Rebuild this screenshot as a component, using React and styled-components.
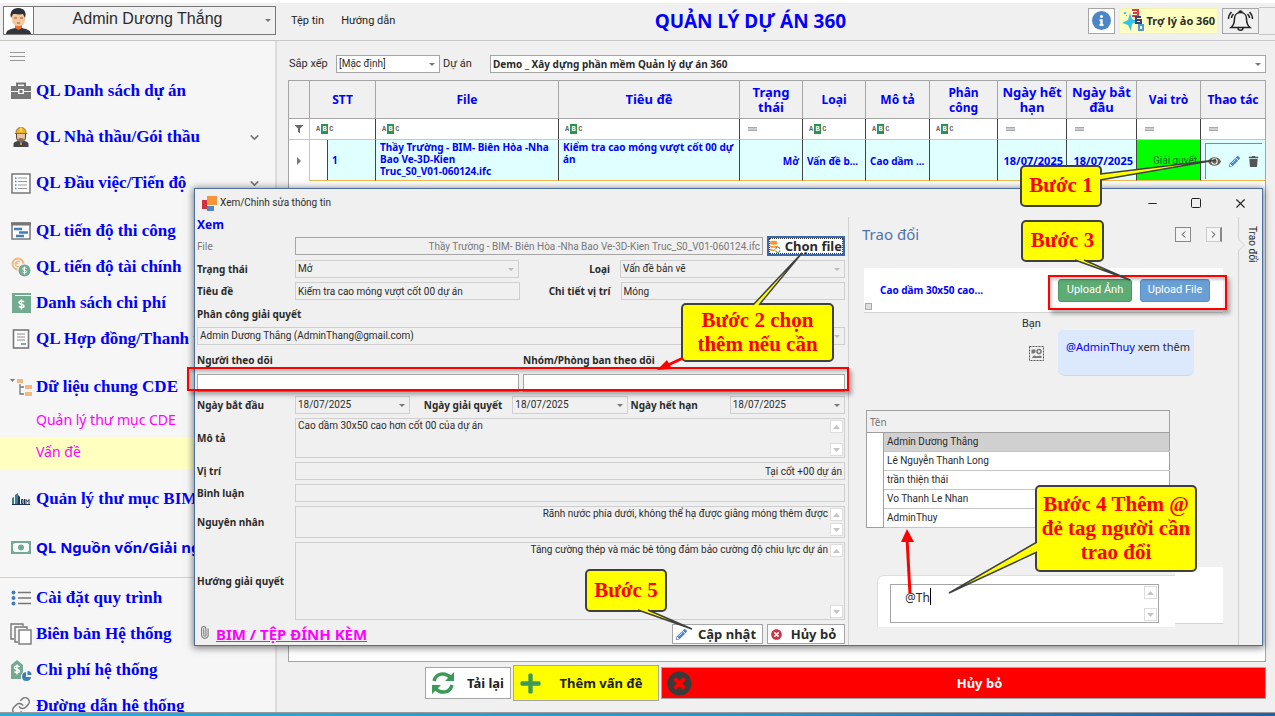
import React from "react";
import styled, { createGlobalStyle, css } from "styled-components";
import {
  FaEye,
  FaTrash,
  FaPencilAlt,
  FaFilter,
  FaTimesCircle,
  FaPlus,
  FaInfo,
} from "react-icons/fa";
import { ChevronDown, ChevronLeft, ChevronRight, Link, Paperclip, Minus, Square, X } from "lucide-react";

const narrow = 'Roboto, "Liberation Sans", sans-serif';
const wide = '"Noto Sans", "Open Sans", sans-serif';
const serif = '"Liberation Serif", serif';

const GlobalStyle = createGlobalStyle`
  * {
    box-sizing: border-box;
  }
  body {
    margin: 0;
    overflow: hidden;
    background: #f0f0f0;
    color: #2b2b2b;
    font-family: ${narrow};
    font-size: 10px;
    line-height: 14px;
  }
  button, input, select, textarea {
    font: inherit;
    color: inherit;
    border-radius: 0;
    margin: 0;
  }
`;

const Page = styled.div`
  position: relative;
  display: flex;
  flex-direction: column;
  height: 100vh;
  border-top: 3px solid #fff;
`;

/* ---------- header ---------- */

const Header = styled.header`
  display: flex;
  align-items: center;
  height: 38px;
  flex-shrink: 0;
  padding: 0 0 2px 3px;
  border-bottom: 1px solid #c6c6c6;
`;

const UserBox = styled.label`
  display: flex;
  align-items: center;
  width: 273px;
  height: 29px;
  border: 1px solid #777;
  background: #f0f0f0;
`;

const UserSelect = styled.select`
  flex: 1;
  min-width: 0;
  height: 27px;
  padding: 0 0 3px;
  border: 0;
  border-left: 1px solid #777;
  background: transparent;
  appearance: none;
  text-align-last: center;
  font-family: "Liberation Sans", sans-serif;
  font-size: 16px;
  line-height: 24px;
`;

const Caret = styled.span`
  flex-shrink: 0;
  width: 0;
  height: 0;
  margin: 0 4px;
  border: 3px solid transparent;
  border-top-color: ${(p) => (p.$light ? "#bbb" : "#777")};
  border-bottom-width: 0;
`;

const TopMenu = styled.nav`
  display: flex;
  gap: 17px;
  padding: 0 18px 0 15px;
  font-size: 11px;
`;

const TopLink = styled.a`
  color: #222;
  text-decoration: none;
`;

const AppTitle = styled.h1`
  flex: 1;
  margin: 0;
  text-align: center;
  font-family: ${wide};
  font-size: 19px;
  line-height: 24px;
  color: #0000ff;
`;

const HeaderButtons = styled.div`
  display: flex;
  align-items: center;
  gap: 4px;
`;

const HeaderButton = styled.button`
  display: flex;
  align-items: center;
  justify-content: center;
  gap: 2px;
  height: 26px;
  padding: 0 ${(p) => (p.$yellow ? 2 : 3)}px;
  border: 1px solid ${(p) => (p.$yellow ? "#f4f4b0" : "#a5a5a5")};
  background: ${(p) => (p.$yellow ? "#ffffc0" : p.$plain ? "#f0f0f0" : "#fff")};
  font-family: ${wide};
  font-size: 11px;
  font-weight: ${(p) => (p.$yellow ? 700 : 400)};
  white-space: nowrap;
`;

const HeaderEnd = styled.div`
  width: 16px;
  height: 28px;
  margin-left: -4px;
  border: solid #c6c6c6;
  border-width: 1px 0;
`;

const InfoDot = styled.span`
  display: flex;
  align-items: center;
  justify-content: center;
  width: 19px;
  height: 19px;
  border-radius: 50%;
  background: #4d86c6;
  color: #fff;
`;

/* ---------- sidebar ---------- */

const Body = styled.div`
  display: flex;
  flex: 1;
  min-height: 0;
`;

const Sidebar = styled.nav`
  width: 277px;
  flex-shrink: 0;
  overflow: hidden;
  background: #f6f6f6;
  border-right: 2px solid #dcdcdc;
`;

const MenuToggle = styled.button`
  display: flex;
  align-items: center;
  width: 100%;
  height: 32px;
  padding: 0 10px;
  border: 0;
  background: transparent;
`;

const SideItem = styled.a`
  display: flex;
  align-items: center;
  height: 36px;
  margin-top: ${(p) => p.$gap || 0}px;
  padding-right: 14px;
  color: #0000ff;
  text-decoration: none;
  white-space: nowrap;
  font-family: ${(p) => (p.$sans ? wide : serif)};
  font-size: ${(p) => (p.$sans ? 15 : 17)}px;
  font-weight: 700;
  line-height: 20px;
`;

const SideIcon = styled.span`
  display: flex;
  align-items: center;
  justify-content: center;
  flex-shrink: 0;
  width: 24px;
  margin: 0 3px 0 9px;
`;

const SideText = styled.span`
  flex: 1;
`;

const SubItem = styled.a`
  display: flex;
  align-items: center;
  height: 32px;
  padding: 0 0 2px 36px;
  background: ${(p) => (p.$active ? "#ffffc0" : "transparent")};
  color: #ff00ff;
  font-family: ${wide};
  font-size: 14px;
  text-decoration: none;
`;

const SideLine = styled.hr`
  margin: 12px 0 2px;
  border: 0;
  border-top: 1px solid #d0d0d0;
`;

/* ---------- main grid ---------- */

const Main = styled.main`
  display: flex;
  flex-direction: column;
  flex: 1;
  min-width: 0;
  padding: 14px 9px 11px 11px;
`;

const Toolbar = styled.div`
  display: flex;
  align-items: center;
  height: 18px;
  margin-bottom: 7px;
`;

const ToolLabel = styled.label`
  width: ${(p) => p.$width}px;
  flex-shrink: 0;
  padding-left: ${(p) => p.$pad}px;
  font-size: 11px;
`;

const SelectBox = styled.span`
  display: flex;
  align-items: center;
  flex: ${(p) => (p.$width ? "none" : "1")};
  width: ${(p) => (p.$width ? p.$width + "px" : "auto")};
  min-width: 0;
  height: 18px;
  border: 1px solid ${(p) => (p.$light ? "#cfcfcf" : "#a5a5a5")};
  background: ${(p) => (p.$light ? "#f0f0f0" : "#fff")};
`;

const PlainSelect = styled.select`
  flex: 1;
  min-width: 0;
  height: 16px;
  padding: 0 2px;
  border: 0;
  background: transparent;
  appearance: none;
  line-height: 14px;
  ${(p) =>
    p.$bold &&
    css`
      font-family: ${wide};
      font-weight: 700;
    `}
`;

const GridArea = styled.div`
  flex: 1;
  min-height: 0;
  border: 1px solid #a5a5a5;
  background: #fff;
`;

const Grid = styled.table`
  width: 100%;
  table-layout: fixed;
  border-collapse: separate;
  border-spacing: 0;
  font-family: ${wide};
`;

const Th = styled.th`
  height: 38px;
  padding: 0 2px;
  border: solid #a5a5a5;
  border-width: 0 1px 1px 0;
  background: #f0f0f0;
  color: #0000ff;
  font-size: ${(p) => (p.$large ? 13 : 12)}px;
  line-height: 15px;
  white-space: pre-line;

  &:last-child {
    border-right: 0;
  }
`;

const FilterTd = styled.td`
  height: 21px;
  padding: 0 6px;
  border-right: 1px solid #444;
  border-bottom: 1px solid #c6c6c6;
  line-height: 10px;

  &:first-child {
    border-right-color: #c6c6c6;
  }
  &:last-child {
    border-right: 0;
  }
`;

const Td = styled.td`
  height: 41px;
  padding: 1px 3px 0 4px;
  border-right: 1px solid #444;
  border-bottom: 1px solid #f0b94e;
  background: ${(p) => p.$bg || "#e0ffff"};
  color: #0000ff;
  font-size: ${(p) => (p.$date ? 11 : 10)}px;
  line-height: 12px;
  font-weight: 700;
  text-align: ${(p) => p.$align || "left"};
  vertical-align: ${(p) => (p.$top ? "top" : "middle")};
  overflow: hidden;
  white-space: ${(p) => (p.$clip ? "nowrap" : "pre-line")};

  &:first-child {
    border-color: #c6c6c6;
    border-bottom: 0;
  }
  &:last-child {
    border-right: 0;
  }
`;

const NumberCell = styled(Td)`
  padding: 0;
`;

const NumberInner = styled.div`
  height: 40px;
  margin-left: 17px;
  padding: 14px 4px;
  border-left: 1px solid #444;
  background: #e0ffff;
`;

const Role = styled.span`
  color: #146c14;
  font-family: ${narrow};
  font-weight: 400;
`;

const Actions = styled.div`
  display: flex;
  align-items: center;
  justify-content: space-between;
  height: 36px;
  padding: 0 3px 0 2px;
  border: solid #888;
  border-width: 1px 0 0 1px;
`;

const IconButton = styled.button`
  display: flex;
  padding: 0;
  border: 0;
  background: transparent;
  color: ${(p) => p.$color || "#555"};
`;

const AbcBox = styled.span`
  display: flex;
  align-items: center;
  height: 10px;
  color: #666;
  font-family: "Liberation Mono", monospace;
  font-size: 7px;
  font-weight: 700;
  line-height: 10px;
`;

const AbcMid = styled.span`
  width: 7px;
  margin: 0 1px;
  background: #2f9150;
  color: #fff;
  text-align: center;
`;

const Equals = styled.span`
  display: block;
  width: 9px;
  height: 4px;
  margin-left: 2px;
  border: solid #aaa;
  border-width: 1px 0;
  background: #ccc;
`;

const Bottom = styled.div`
  display: flex;
  align-items: center;
  gap: 2px;
  height: 36px;
  margin-top: 3px;
  padding-left: 137px;
`;

const BigButton = styled.button`
  display: flex;
  align-items: center;
  flex: ${(p) => (p.$grow ? 1 : "none")};
  width: ${(p) => (p.$width ? p.$width + "px" : "auto")};
  height: ${(p) => (p.$tall ? 36 : 32)}px;
  padding: 0 6px 0 5px;
  border: 1px solid #a5a5a5;
  background: ${(p) => p.$bg || "#fff"};
  color: ${(p) => p.$color || "#222"};
  font-family: ${wide};
  font-size: 13px;
  font-weight: 700;
`;

const BigText = styled.span`
  flex: 1;
  padding-left: ${(p) => p.$pad || 0}px;
  text-align: ${(p) => (p.$end ? "right" : "center")};
`;

const Taskbar = styled.div`
  height: 4px;
  flex-shrink: 0;
  border-top: 1px solid #999;
  background: linear-gradient(90deg, #1fb0e6, #2593d2 60%, #1c62b4);
`;

/* ---------- dialog ---------- */

const Dialog = styled.section`
  position: absolute;
  top: 185px;
  left: 194px;
  right: 12px;
  display: flex;
  flex-direction: column;
  border: 1px solid #4a6fa5;
  background: #f0f0f0;
  box-shadow: 0 1px 7px 1px rgba(0, 0, 0, 0.5);
`;

const TitleBar = styled.div`
  display: flex;
  align-items: center;
  height: 28px;
  padding: 0 14px 0 7px;
  gap: 3px;
`;

const TitleText = styled.span`
  flex: 1;
`;

const WindowButtons = styled.div`
  display: flex;
  align-items: center;
  gap: 31px;
`;

const DialogBody = styled.div`
  display: flex;
`;

const Form = styled.form`
  display: flex;
  flex-direction: column;
  gap: 4px;
  flex: 1;
  min-width: 0;
  padding: 0 3px 1px 2px;
  border-right: 1px solid #d0d0d0;
`;

const FormTitle = styled.h2`
  margin: 0;
  font-family: ${wide};
  font-size: 12px;
  line-height: 15px;
  color: #0000ff;
`;

const Row = styled.div`
  display: flex;
  align-items: center;
  gap: ${(p) => p.$gap || 0}px;
  height: ${(p) => p.$height || 18}px;
`;

const Label = styled.label`
  flex-shrink: 0;
  width: ${(p) => (p.$width ? p.$width + "px" : "auto")};
  padding-right: ${(p) => p.$pad || 0}px;
  text-align: ${(p) => (p.$right ? "right" : "left")};
  font-family: ${wide};
  font-weight: ${(p) => (p.$muted ? 400 : 700)};
  color: ${(p) => (p.$muted ? "#777" : "#2b2b2b")};
  white-space: nowrap;
`;

const Field = styled.input`
  flex: 1;
  min-width: 0;
  height: 18px;
  padding: 0 2px;
  border: 1px solid ${(p) => (p.$strong ? "#a5a5a5" : "#cfcfcf")};
  background: ${(p) => (p.$white ? "#fff" : "#f0f0f0")};
  color: ${(p) => (p.$muted ? "#777" : "#2b2b2b")};
  text-align: ${(p) => (p.$right ? "right" : "left")};
`;

const Half = styled.div`
  display: flex;
  align-items: center;
  flex: 1;
  min-width: 0;
`;

const AreaBox = styled.div`
  display: flex;
  flex: 1;
  min-width: 0;
  height: 100%;
  border: 1px solid ${(p) => (p.$strong ? "#a5a5a5" : "#cfcfcf")};
  background: ${(p) => (p.$strong ? "#fff" : "#f0f0f0")};
`;

const Area = styled.textarea`
  flex: 1;
  min-width: 0;
  padding: ${(p) => (p.$chat ? "6px 14px" : "0 2px")};
  border: 0;
  resize: none;
  overflow: hidden;
  background: transparent;
  font-family: ${(p) => (p.$chat ? wide : narrow)};
  font-size: ${(p) => (p.$chat ? 12 : 10)}px;
  text-align: ${(p) => (p.$right ? "right" : "left")};
`;

const Scroller = styled.div`
  display: flex;
  flex-direction: column;
  justify-content: space-between;
  width: 14px;
  padding: 1px 1px 1px 0;
`;

const ScrollButton = styled.button`
  display: flex;
  align-items: center;
  justify-content: center;
  width: 13px;
  height: 13px;
  padding: 0;
  border: 1px solid #ddd;
  background: #fff;
`;

const FileButton = styled.button`
  display: flex;
  align-items: center;
  gap: 4px;
  height: 20px;
  width: ${(p) => p.$width}px;
  margin-left: 4px;
  padding: 0 3px;
  border: ${(p) => (p.$focus ? "2px solid #3b68a8" : "1px solid #a5a5a5")};
  background: #fff;
  font-family: ${wide};
  font-size: 13px;
  font-weight: 700;
  white-space: nowrap;
  ${(p) =>
    p.$focus &&
    css`
      outline: 1px dotted #333;
      outline-offset: -3px;
      padding: 0 1px;
    `}
`;

const AttachLink = styled.a`
  flex: 1;
  color: #ff00ff;
  font-family: ${wide};
  font-size: 15px;
  font-weight: 700;
  line-height: 18px;
`;

/* ---------- chat ---------- */

const Chat = styled.section`
  display: flex;
  flex-direction: column;
  width: 389px;
  padding: 0 15px 0 15px;
`;

const ChatHead = styled.div`
  display: flex;
  align-items: center;
  height: 34px;
  gap: 15px;
  padding-right: 1px;
`;

const ChatTitle = styled.h2`
  flex: 1;
  margin: 0 0 0 -2px;
  color: #4f74a8;
  font-family: ${wide};
  font-size: 15px;
  font-weight: 400;
`;

const NavButton = styled.button`
  display: flex;
  align-items: center;
  justify-content: center;
  width: 16px;
  height: 15px;
  padding: 0;
  border: 1px solid ${(p) => (p.$last ? "#ccc" : "#888")};
  border-right: ${(p) => (p.$last ? "2px" : "1px")} solid #888;
  background: #f4f4f4;
`;

const UploadCard = styled.div`
  display: flex;
  align-items: center;
  gap: 8px;
  height: 45px;
  margin-top: 17px;
  padding: 0 13px 0 1px;
  border-bottom: 1px solid #d5d5d5;
  background: #fff;
`;

const Handle = styled.span`
  align-self: flex-end;
  width: 7px;
  height: 7px;
  margin-bottom: 2px;
  border: 1px solid #aaa;
  background: #ddd;
`;

const CardText = styled.span`
  flex: 1;
  color: #0000ff;
  font-family: ${wide};
  font-size: 10px;
  font-weight: 700;
`;

const UploadButton = styled.button`
  width: ${(p) => p.$width}px;
  height: 23px;
  padding: 0;
  border: 1px solid ${(p) => (p.$green ? "#4a9a60" : "#5890c8")};
  border-radius: 3px;
  background: ${(p) => (p.$green ? "#5dab75" : "#6a9fd5")};
  color: #fff;
  font-family: ${narrow};
  font-size: 11px;
`;

const Message = styled.div`
  display: flex;
  align-items: flex-start;
  margin-top: 4px;
  padding-left: 158px;
  font-family: ${wide};
  font-size: 11px;
`;

const Sender = styled.div`
  display: flex;
  flex-direction: column;
  gap: 15px;
  width: 36px;
`;

const SenderIcon = styled.span`
  display: flex;
  padding-left: 7px;
`;

const SenderName = styled.span`
  font-family: ${narrow};
`;

const Bubble = styled.p`
  width: 136px;
  height: 46px;
  margin: 13px 0 0;
  padding: 10px 8px;
  border-radius: 5px 0 7px 7px;
  border-bottom: 1px solid #c8d8f0;
  background: #dce8fb;
  white-space: nowrap;
`;

const Mention = styled.span`
  color: #0000ff;
`;

const People = styled.table`
  width: 304px;
  margin: 34px 0 0 2px;
  border: 1px solid #a0a0a0;
  border-collapse: collapse;
  background: #fff;
`;

const PeopleHead = styled.th`
  height: 22px;
  padding: 0 3px;
  border-bottom: 1px solid #a0a0a0;
  background: #f0f0f0;
  color: #777;
  font-family: ${wide};
  font-weight: 400;
  text-align: left;
`;

const Gutter = styled.td`
  width: 17px;
  padding: 0;
  border-right: 1px solid #a0a0a0;
`;

const Person = styled.td`
  height: 19px;
  padding: 0 3px;
  border-bottom: 1px solid #c6c6c6;
  background: ${(p) => (p.$active ? "#d0d0d0" : "#fff")};
`;

const Composer = styled.div`
  display: flex;
  align-items: flex-start;
  margin-top: 39px;
`;

const ComposerCard = styled.div`
  width: 298px;
  height: 52px;
  margin: 8px 0 0 13px;
  padding: 8px 16px 4px 12px;
  border: solid #ddd;
  border-width: 1px 0 0 1px;
  border-radius: 7px 0 0 0;
  background: #fff;
`;

const ComposerSide = styled.div`
  flex: 1;
  height: 57px;
  border-bottom: 1px solid #d5d5d5;
  background: #fff;
`;

const SideTab = styled.aside`
  display: flex;
  width: 24px;
`;

const TabText = styled.span`
  padding-top: 9px;
  writing-mode: vertical-rl;
`;

/* ---------- step notes ---------- */

const Callout = styled.div`
  position: absolute;
  top: ${(p) => p.$top}px;
  left: ${(p) => p.$left}px;
  display: flex;
  align-items: center;
  justify-content: center;
  width: ${(p) => p.$width}px;
  height: ${(p) => p.$height}px;
  padding-bottom: 2px;
  border: 2px solid #404040;
  border-radius: 5px;
  background: #ffff00;
  color: #ff0000;
  font-family: ${serif};
  font-size: 21px;
  font-weight: 700;
  line-height: 24px;
  text-align: center;
  white-space: pre-line;
`;

const RedFrame = styled.div`
  position: absolute;
  top: ${(p) => p.$top}px;
  left: ${(p) => p.$left}px;
  width: ${(p) => p.$width}px;
  height: ${(p) => p.$height}px;
  border: 2px solid #f00;
  box-shadow: 3px 4px 4px rgba(0, 0, 0, 0.3), inset 2px 3px 3px rgba(0, 0, 0, 0.2);
  pointer-events: none;
`;

const Pointers = styled.svg`
  position: absolute;
  top: -3px;
  left: 0;
  pointer-events: none;
`;

/* ---------- drawings ---------- */

const icons = {
  briefcase: (
    <svg width="20" height="18" viewBox="0 0 20 18">
      <path d="M6 4V1.500h8V4" fill="none" stroke="#777" strokeWidth="2" />
      <path d="M0 4h20v5h-7V7H7v2H0zM0 10h7v2h6v-2h7v7H0z" fill="#777" />
      <rect x="8.500" y="8" width="3" height="3" fill="#777" />
    </svg>
  ),
  worker: (
    <svg width="16" height="20" viewBox="0 0 16 20">
      <path d="M3.500 6h9v4c0 3-2 5-4.500 5s-4.500-2-4.500-5z" fill="#e9c3a0" stroke="#54402f" />
      <path d="M5 11.500c1 .6 2-.5 3-.5s2 1.100 3 .5c0 2-1.500 3-3 3s-3-1-3-3z" fill="#8a6a54" />
      <path d="M3 5.500c0-3 2-5 5-5s5 2 5 5l1 1H2z" fill="#f0b429" stroke="#775615" strokeWidth="0.700" />
      <path d="M7 .5h2v4H7z" fill="#ffd766" />
      <path d="M0.500 20v-3c0-2 3-3 5-3l2.500 2 2.500-2c2 0 5 1 5 3v3z" fill="#45454e" />
      <path d="M7 16h2v2H7z" fill="#e58a3a" />
    </svg>
  ),
  list: (
    <svg width="20" height="21" viewBox="0 0 20 21">
      <rect x="1" y="1" width="18" height="19" fill="#fff" stroke="#777" strokeWidth="1.500" />
      <path d="M7 5h9M7 8.500h9M7 12h9M7 15.500h9" stroke="#999" />
      <path d="M4 5h1.500M4 8.500h1.500M4 12h1.500M4 15.500h1.500" stroke="#4d86c6" strokeWidth="1.500" />
    </svg>
  ),
  gantt: (
    <svg width="20" height="18" viewBox="0 0 20 18">
      <rect x="1" y="1" width="18" height="16" fill="#fff" stroke="#777" strokeWidth="1.500" />
      <path d="M0 2h20" stroke="#777" strokeWidth="3" />
      <path d="M3 7h8M8 10.500h9M5 14h8" stroke="#3f7fb8" strokeWidth="2.500" />
    </svg>
  ),
  coins: (
    <svg width="20" height="20" viewBox="0 0 20 20">
      <circle cx="7" cy="7" r="5.500" fill="none" stroke="#f3b77c" strokeWidth="2" />
      <path d="M9.500 5c-3-2-5 0-5 2s2 4 5 2M3.500 6.500h4" fill="none" stroke="#f3b77c" strokeWidth="1.300" />
      <circle cx="13.500" cy="13.500" r="6.500" fill="#72ab90" stroke="#f6f6f6" />
      <path d="M15.500 11.500c-1-1-4-1-4 .5s4 1 4 2.700-3 1.500-4 .3M13.500 9.500v8" fill="none" stroke="#fff" />
    </svg>
  ),
  book: (
    <svg width="19" height="20" viewBox="0 0 19 20">
      <path d="M0 0h19v2H3v1h16v17H0z" fill="#72ab90" />
      <path d="M12 9c-1-1.500-5-1.500-5 .6s5 1.200 5 3.300-4 1.800-5 .4M9.500 6.500v10" fill="none" stroke="#fff" strokeWidth="1.500" />
    </svg>
  ),
  contract: (
    <svg width="18" height="20" viewBox="0 0 18 20">
      <rect x="1.500" y="1" width="15" height="18" fill="#fff" stroke="#777" strokeWidth="1.600" />
      <path d="M5 5h8M5 8h8M5 11h8" stroke="#888" />
      <path d="M9 15h5" stroke="#4d86c6" strokeWidth="1.500" />
    </svg>
  ),
  tree: (
    <svg width="22" height="18" viewBox="0 0 22 18">
      <path d="M0 1h5L2.500 4z" fill="#777" />
      <path d="M7 1h6v4H7zM15 7h7v4h-7zM15 14h7v4h-7z" fill="#f3b77c" />
      <path d="M10 6v10h4M10 9h4" fill="none" stroke="#777" strokeWidth="1.300" />
    </svg>
  ),
  bim: (
    <svg width="18" height="14" viewBox="0 0 18 14">
      <path d="M0 12V6l2-1v7M3 12V3l3-2v11" fill="#3f7f8c" />
      <path d="M6 12V3l2 2v7z" fill="#1f3356" />
      <path d="M9.500 7.500h1.500v4H9.500zM12.500 7v5M14 12V7.500l1.500 2L17 7.500V12" fill="none" stroke="#1f3356" />
      <path d="M0 12.500h18" stroke="#1f3356" />
    </svg>
  ),
  cash: (
    <svg width="20" height="13" viewBox="0 0 20 13">
      <rect x="1" y="1" width="18" height="11" fill="#fff" stroke="#72ab90" strokeWidth="2" />
      <path d="M1 1h4L1 4zM15 1h4v3zM1 12V9l4 3zM19 12V9l-4 3z" fill="#72ab90" />
      <circle cx="10" cy="6.500" r="3" fill="#72ab90" />
    </svg>
  ),
  process: (
    <svg width="20" height="16" viewBox="0 0 20 16">
      <circle cx="2.500" cy="2.500" r="2" fill="#3f7fb8" />
      <circle cx="2.500" cy="8" r="2" fill="#3f7fb8" />
      <circle cx="2.500" cy="13.500" r="2" fill="#3f7fb8" />
      <path d="M7 2.500h13M7 8h13M7 13.500h13" stroke="#777" strokeWidth="1.500" />
    </svg>
  ),
  copies: (
    <svg width="22" height="22" viewBox="0 0 22 22">
      <path d="M4 16H1V1h12v2M8 19H5V4h12v2" fill="none" stroke="#777" strokeWidth="1.400" />
      <rect x="9" y="7" width="12" height="14" fill="#fff" stroke="#777" strokeWidth="1.400" />
    </svg>
  ),
  cost: (
    <svg width="21" height="21" viewBox="0 0 21 21">
      <path d="M0 5l6-5 6 5v7l-2 3v4H0z" fill="#72ab90" />
      <path d="M8.500 7c-1-1.500-5-1.500-5 .7s5 1.300 5 3.300-4 2-5 .5M6 4.500v10" fill="none" stroke="#fff" strokeWidth="1.400" />
      <path d="M15 12a4.500 4.500 0 1 0 5 5h-5z" fill="#3f7fb8" />
      <path d="M16.500 11a4 4 0 0 1 4 4h-4z" fill="#3f7fb8" />
    </svg>
  ),
  link: <Link size={20} color="#777" strokeWidth={1.8} />,
};

const Avatar = () => (
  <svg width="29" height="27" viewBox="0 0 29 27">
    <rect width="29" height="27" fill="#fff" />
    <path d="M2 27c0-4 5-5 9-6h7c4 1 9 2 9 6z" fill="#33333b" />
    <path d="M11 17h7v4l-3.500 2L11 21z" fill="#e8702e" />
    <path d="M8 7h13v6c0 4-3 6-6.500 6S8 17 8 13z" fill="#f5c79b" />
    <path d="M7 11C5 5 9 1 14 1c6 0 9 4 7 10l-2-4c-4 1-8 0-10 0z" fill="#2b2f38" />
    <path d="M10 11h3M16 11h3M13 16h3" stroke="#8a5a3b" />
  </svg>
);

const Assistant = () => (
  <svg width="23" height="23" viewBox="0 0 23 23">
    <path d="M8 4l2 6 6 2-6 3-1 7-3-6-6-2 6-3z" fill="#35c5ea" />
    <path d="M2 3h2v2H2zM4 6h1v1H4z" fill="#35c5ea" />
    <path d="M10 1h6v6h-6M11 4h5" fill="none" stroke="#e0374a" strokeWidth="2" />
    <path d="M19 8h-5v6h5v-3h-5" fill="none" stroke="#3b3f7a" strokeWidth="2" />
    <path d="M17 16h4v5h-4z" fill="none" stroke="#4d9bd6" strokeWidth="2" />
  </svg>
);

const AppLogo = () => (
  <svg width="15" height="15" viewBox="0 0 15 15">
    <rect y="4" width="5" height="9" fill="#d0313f" />
    <rect x="5" width="10" height="9" fill="#f3953b" />
    <rect x="5" y="10" width="7" height="5" fill="#4d86c6" />
  </svg>
);

const Database = () => (
  <svg width="15" height="15" viewBox="0 0 13 15">
    <path d="M0 2c0-2 9-2 9 0v2c0 2-9 2-9 0zM0 6c2 1.500 7 1.500 9 0v2c-1 1.500-8 1.500-9 0zM0 10c2 1 4 1.300 6 1v2c-3 0-6 0-6-1z" fill="#f3953b" />
    <path d="M7 11a2.500 2.500 0 0 1 5-.5M12 12a2.500 2.500 0 0 1-5 .5" fill="none" stroke="#2f9150" strokeWidth="1.200" />
  </svg>
);

const Picture = () => (
  <svg width="15" height="15" viewBox="0 0 15 15">
    <rect x="0.500" y="0.500" width="14" height="14" fill="none" stroke="#555" strokeDasharray="2 1" />
    <path d="M2.500 3.500h4v3l-2 1h-2zM3 12c1-3 3-3 4-2s3-1 5.500 0v2z" fill="#777" />
    <circle cx="10" cy="5.500" r="2" fill="none" stroke="#777" strokeWidth="1.500" />
  </svg>
);

const Refresh = () => (
  <svg width="24" height="24" viewBox="0 0 24 24">
    <path d="M3 10C5 2 14 1 19 6M21 14c-2 8-11 9-16 4" fill="none" stroke="#3b9a57" strokeWidth="3.500" />
    <path d="M23 1v9h-9zM1 23v-9h9z" fill="#3b9a57" />
  </svg>
);

const ArrowGlyph = ({ up }) => (
  <svg width="7" height="4" viewBox="0 0 7 4">
    <path d={up ? "M0 4h7L3.500 0z" : "M0 0h7L3.500 4z"} fill="#c4c4c4" />
  </svg>
);

const Abc = () => (
  <AbcBox>
    A<AbcMid>B</AbcMid>C
  </AbcBox>
);

const sideItems = [
  { icon: "briefcase", text: "QL Danh sách dự án" },
  { icon: "worker", text: "QL Nhà thầu/Gói thầu", gap: 10, more: true },
  { icon: "list", text: "QL Đầu việc/Tiến độ", gap: 10, more: true },
  { icon: "gantt", text: "QL tiến độ thi công", gap: 12 },
  { icon: "coins", text: "QL tiến độ tài chính" },
  { icon: "book", text: "Danh sách chi phí" },
  { icon: "contract", text: "QL Hợp đồng/Thanh toán" },
  { icon: "tree", text: "Dữ liệu chung CDE", gap: 12 },
];

const sideItemsAfter = [
  { icon: "bim", text: "Quản lý thư mục BIM", gap: 12 },
  { icon: "cash", text: "QL Nguồn vốn/Giải ngân", gap: 12, sans: true },
];

const systemItems = [
  { icon: "process", text: "Cài đặt quy trình" },
  { icon: "copies", text: "Biên bản Hệ thống" },
  { icon: "cost", text: "Chi phí hệ thống" },
  { icon: "link", text: "Đường dẫn hệ thống" },
];

const columns = [
  { name: "", width: 21 },
  { name: "STT", width: 66, abc: true },
  { name: "File", width: 183, abc: true },
  { name: "Tiêu đề", abc: true, large: true },
  { name: "Trạng\nthái", width: 63, large: true },
  { name: "Loại", width: 63, abc: true },
  { name: "Mô tả", width: 64, abc: true },
  { name: "Phân\ncông", width: 68, abc: true },
  { name: "Ngày hết\nhạn", width: 69, large: true },
  { name: "Ngày bắt\nđầu", width: 70, large: true },
  { name: "Vai trò", width: 64 },
  { name: "Thao tác", width: 64 },
];

const people = [
  "Admin Dương Thắng",
  "Lê Nguyễn Thanh Long",
  "trần thiện thái",
  "Vo Thanh Le Nhan",
  "AdminThuy",
];

const SideLinks = ({ items }) =>
  items.map((item) => (
    <SideItem href="#" key={item.text} $gap={item.gap} $sans={item.sans}>
      <SideIcon>{icons[item.icon]}</SideIcon>
      <SideText>{item.text}</SideText>
      {item.more && <ChevronDown size={13} color="#777" strokeWidth={3} />}
    </SideItem>
  ));

const Combo = ({ id, value, width, light, bold }) => (
  <SelectBox $width={width} $light={light}>
    <PlainSelect id={id} $bold={bold} defaultValue={value}>
      <option>{value}</option>
    </PlainSelect>
    <Caret $light={light === "dim"} />
  </SelectBox>
);

const Scroll = () => (
  <Scroller>
    <ScrollButton type="button" aria-label="Lên">
      <ArrowGlyph up />
    </ScrollButton>
    <ScrollButton type="button" aria-label="Xuống">
      <ArrowGlyph />
    </ScrollButton>
  </Scroller>
);

const AreaRow = ({ id, label, value, height, right }) => (
  <Row $height={height}>
    <Label htmlFor={id} $width={98}>{label}</Label>
    <AreaBox>
      <Area id={id} defaultValue={value} $right={right} />
      <Scroll />
    </AreaBox>
  </Row>
);

const ProjectHeader = () => (
  <Header>
    <UserBox>
      <Avatar />
      <UserSelect aria-label="Người dùng">
        <option>Admin Dương Thắng</option>
      </UserSelect>
      <Caret />
    </UserBox>
    <TopMenu>
      <TopLink href="#">Tệp tin</TopLink>
      <TopLink href="#">Hướng dẫn</TopLink>
    </TopMenu>
    <AppTitle>QUẢN LÝ DỰ ÁN 360</AppTitle>
    <HeaderButtons>
      <HeaderButton aria-label="Thông tin">
        <InfoDot>
          <FaInfo size={11} />
        </InfoDot>
      </HeaderButton>
      <HeaderButton $yellow>
        <Assistant />
        Trợ lý ảo 360
      </HeaderButton>
      <HeaderButton $plain aria-label="Thông báo">
        <svg width="29" height="22" viewBox="0 0 29 22">
          <path
            d="M14.500 2.500c-4 0-6 3-6 6 0 5-1 7-3.500 9h19c-2.500-2-3.500-4-3.500-9 0-3-2-6-6-6zM13 2.500a1.500 1.500 0 0 1 3 0M12 18c0 3 5 3 5 0M5.500 2c-2 2-3 4-3 7M23.500 2c2 2 3 4 3 7M7.500 4c-1 1-2 3-2 4M21.500 4c1 1 2 3 2 4"
            fill="none"
            stroke="#222"
            strokeWidth="1.500"
          />
        </svg>
      </HeaderButton>
      <HeaderEnd />
    </HeaderButtons>
  </Header>
);

const IssueGrid = () => (
  <GridArea>
    <Grid>
      <colgroup>
        {columns.map((c) => (
          <col key={c.name} width={c.width} />
        ))}
      </colgroup>
      <thead>
        <tr>
          {columns.map((c) => (
            <Th key={c.name} $large={c.large}>{c.name}</Th>
          ))}
        </tr>
      </thead>
      <tbody>
        <tr>
          {columns.map((c, i) => (
            <FilterTd key={c.name}>
              {i === 0 ? <FaFilter size={8} color="#666" /> : c.abc ? <Abc /> : <Equals />}
            </FilterTd>
          ))}
        </tr>
        <tr>
          <Td $bg="#fff">
            <svg width="12" height="8" viewBox="0 0 12 8">
              <path d="M4 0l4 4-4 4z" fill="#777" />
            </svg>
          </Td>
          <NumberCell $bg="#fff">
            <NumberInner>1</NumberInner>
          </NumberCell>
          <Td $top>{"Thầy Trường - BIM- Biên Hòa -Nha\nBao Ve-3D-Kien\nTruc_S0_V01-060124.ifc"}</Td>
          <Td $top>Kiểm tra cao móng vượt cốt 00 dự án</Td>
          <Td $align="right">Mở</Td>
          <Td $clip>Vấn đề b...</Td>
          <Td $clip>Cao dầm ...</Td>
          <Td />
          <Td $align="right" $clip $date>18/07/2025</Td>
          <Td $align="right" $clip $date>18/07/2025</Td>
          <Td $align="right" $bg="#00ff00"><Role>Giải quyết</Role></Td>
          <Td>
            <Actions>
              <IconButton aria-label="Xem" $color="#6e5a4c"><FaEye size={13} /></IconButton>
              <IconButton aria-label="Sửa" $color="#4d86c6"><FaPencilAlt size={11} /></IconButton>
              <IconButton aria-label="Xóa"><FaTrash size={11} /></IconButton>
            </Actions>
          </Td>
        </tr>
      </tbody>
    </Grid>
  </GridArea>
);

const IssueForm = () => (
  <Form>
    <FormTitle>Xem</FormTitle>
    <Row $height={20}>
      <Label htmlFor="file" $width={98} $muted>File</Label>
      <Field id="file" defaultValue="Thầy Trường - BIM- Biên Hòa -Nha Bao Ve-3D-Kien Truc_S0_V01-060124.ifc" $right $strong $muted />
      <FileButton type="button" $width={78} $focus>
        <Database />
        Chọn file
      </FileButton>
    </Row>
    <Row>
      <Label htmlFor="status" $width={98}>Trạng thái</Label>
      <Combo id="status" value="Mở" width={224} light="dim" />
      <Label htmlFor="kind" $width={101} $pad={10} $right>Loại</Label>
      <Combo id="kind" value="Vấn đề bản vẽ" light="dim" />
    </Row>
    <Row>
      <Label htmlFor="title" $width={98}>Tiêu đề</Label>
      <Half>
        <Field id="title" defaultValue="Kiểm tra cao móng vượt cốt 00 dự án" />
      </Half>
      <Label htmlFor="place" $width={101} $pad={10} $right>Chi tiết vị trí</Label>
      <Half>
        <Field id="place" defaultValue="Móng" />
      </Half>
    </Row>
    <Row $height={19}>
      <Label htmlFor="assignee">Phân công giải quyết</Label>
    </Row>
    <Row>
      <Combo id="assignee" value="Admin Dương Thắng (AdminThang@gmail.com)" light="dim" />
    </Row>
    <Row $height={21} $gap={4}>
      <Half>
        <Label htmlFor="watcher">Người theo dõi</Label>
      </Half>
      <Half>
        <Label htmlFor="group">Nhóm/Phòng ban theo dõi</Label>
      </Half>
    </Row>
    <Row $gap={4}>
      <Field id="watcher" $white $strong />
      <Field id="group" $white $strong />
    </Row>
    <Row>
      <Label htmlFor="start" $width={98}>Ngày bắt đầu</Label>
      <Combo id="start" value="18/07/2025" light />
      <Label htmlFor="solve" $width={102} $pad={10} $right>Ngày giải quyết</Label>
      <Combo id="solve" value="18/07/2025" light />
      <Label htmlFor="end" $width={102} $pad={32} $right>Ngày hết hạn</Label>
      <Combo id="end" value="18/07/2025" light />
    </Row>
    <AreaRow id="desc" label="Mô tả" value="Cao dầm 30x50 cao hơn cốt 00 của dự án" height={40} />
    <Row>
      <Label htmlFor="position" $width={98}>Vị trí</Label>
      <Field id="position" defaultValue="Tại cốt +00 dự án" $right />
    </Row>
    <Row>
      <Label htmlFor="comment" $width={98}>Bình luận</Label>
      <Field id="comment" />
    </Row>
    <AreaRow id="cause" label="Nguyên nhân" value="Rãnh nước phía dưới, không thể hạ được giằng móng thêm được" height={32} right />
    <AreaRow id="fix" label="Hướng giải quyết" value="Tăng cường thép và mác bê tông đảm bảo cường độ chiu lực dự án" height={78} right />
    <Row $height={20}>
      <Label as="span" $width={19} $pad={5} $right>
        <Paperclip size={13} color="#777" transform="rotate(-45)" />
      </Label>
      <AttachLink href="#">BIM / TỆP ĐÍNH KÈM</AttachLink>
      <FileButton type="button" $width={91}>
        <FaPencilAlt size={11} color="#4d86c6" />
        <BigText $pad={4}>Cập nhật</BigText>
      </FileButton>
      <FileButton type="button" $width={78}>
        <FaTimesCircle size={11} color="#cf3242" />
        <BigText>Hủy bỏ</BigText>
      </FileButton>
    </Row>
  </Form>
);

const ChatPanel = () => (
  <Chat>
    <ChatHead>
      <ChatTitle>Trao đổi</ChatTitle>
      <NavButton aria-label="Trước"><ChevronLeft size={11} /></NavButton>
      <NavButton aria-label="Sau" $last><ChevronRight size={11} /></NavButton>
    </ChatHead>
    <UploadCard>
      <Handle />
      <CardText>Cao dầm 30x50 cao...</CardText>
      <UploadButton $width={74} $green>Upload Ảnh</UploadButton>
      <UploadButton $width={70}>Upload File</UploadButton>
    </UploadCard>
    <Message>
      <Sender>
        <SenderName>Bạn</SenderName>
        <SenderIcon>
          <Picture />
        </SenderIcon>
      </Sender>
      <Bubble>
        <Mention>@AdminThuy</Mention> xem thêm
      </Bubble>
    </Message>
    <People>
      <thead>
        <tr>
          <PeopleHead colSpan={2}>Tên</PeopleHead>
        </tr>
      </thead>
      <tbody>
        {people.map((name, i) => (
          <tr key={name}>
            <Gutter />
            <Person $active={i === 0}>{name}</Person>
          </tr>
        ))}
      </tbody>
    </People>
    <Composer>
      <ComposerCard>
        <AreaBox $strong>
          <Area $chat aria-label="Tin nhắn" defaultValue="@Th" />
          <Scroll />
        </AreaBox>
      </ComposerCard>
      <ComposerSide />
    </Composer>
  </Chat>
);

const StepNotes = () => (
  <>
    <RedFrame $top={364} $left={187} $width={662} $height={24} />
    <RedFrame $top={272} $left={1048} $width={179} $height={35} />
    <Callout $top={162} $left={1020} $width={82} $height={42}>Bước 1</Callout>
    <Callout $top={300} $left={681} $width={153} $height={59}>{"Bước 2 chọn\nthêm nếu cần"}</Callout>
    <Callout $top={217} $left={1021} $width={83} $height={42}>Bước 3</Callout>
    <Callout $top={482} $left={1035} $width={162} $height={87}>{"Bước 4 Thêm @\nđẻ tag người cần\ntrao đổi"}</Callout>
    <Callout $top={566} $left={585} $width={82} $height={43}>Bước 5</Callout>
    <Pointers width="1240" height="660">
      <g fill="#ff0" stroke="#404040" strokeWidth="1.500">
        <path d="M1100 174L1216 160L1100 180" />
        <path d="M753 305L802 253L759 305" />
        <path d="M1075 260L1130 280L1084 260" />
        <path d="M1037 542L949 593L1037 552" />
        <path d="M638 610L692 629L648 610" />
      </g>
      <g fill="#f00" stroke="#f00" strokeWidth="3">
        <path d="M683 358L668 365" />
        <path d="M910 594L907 538" />
        <path d="M657 370L667 360L672 369z" strokeWidth="0" />
        <path d="M907 529L914 542L901 542z" strokeWidth="0" />
      </g>
      <path d="M930.500 588v17" stroke="#000" />
    </Pointers>
  </>
);

const App = () => {
  return (
    <Page>
      <GlobalStyle />
      <ProjectHeader />
      <Body>
        <Sidebar>
          <MenuToggle aria-label="Menu">
            <svg width="15" height="10" viewBox="0 0 15 10">
              <path d="M0 .5h15M0 4.500h15M0 8.500h15" stroke="#999" />
            </svg>
          </MenuToggle>
          <SideLinks items={sideItems} />
          <SubItem href="#">Quản lý thư mục CDE</SubItem>
          <SubItem href="#" $active>Vấn đề</SubItem>
          <SideLinks items={sideItemsAfter} />
          <SideLine />
          <SideLinks items={systemItems} />
        </Sidebar>
        <Main>
          <Toolbar>
            <ToolLabel htmlFor="sort" $width={48} $pad={1}>Sắp xếp</ToolLabel>
            <Combo id="sort" value="[Mặc định]" width={104} />
            <ToolLabel htmlFor="project" $width={50} $pad={3}>Dự án</ToolLabel>
            <Combo id="project" value="Demo _ Xây dựng phần mềm Quản lý dự án 360" bold />
          </Toolbar>
          <IssueGrid />
          <Bottom>
            <BigButton $width={86}>
              <Refresh />
              <BigText $end>Tải lại</BigText>
            </BigButton>
            <BigButton $width={146} $bg="#ffff00" $tall>
              <FaPlus size={23} color="#3b9a57" />
              <BigText $pad={8}>Thêm vấn đề</BigText>
            </BigButton>
            <BigButton $grow $bg="#ff0000" $color="#fff">
              <FaTimesCircle size={25} color="#3a3a3a" />
              <BigText $pad={8}>Hủy bỏ</BigText>
            </BigButton>
          </Bottom>
        </Main>
      </Body>
      <Taskbar />
      <Dialog>
        <TitleBar>
          <AppLogo />
          <TitleText>Xem/Chỉnh sửa thông tin</TitleText>
          <WindowButtons>
            <IconButton aria-label="Thu nhỏ"><Minus size={13} color="#222" strokeWidth={1.8} /></IconButton>
            <IconButton aria-label="Phóng to"><Square size={12} color="#222" /></IconButton>
            <IconButton aria-label="Đóng"><X size={15} color="#222" strokeWidth={1.8} /></IconButton>
          </WindowButtons>
        </TitleBar>
        <DialogBody>
          <IssueForm />
          <ChatPanel />
          <SideTab>
            <svg width="7" height="428" viewBox="0 0 7 428">
              <path d="M.5 0v22l6 6-6 6v394" fill="none" stroke="#d0d0d0" />
            </svg>
            <TabText>Trao đổi</TabText>
          </SideTab>
        </DialogBody>
      </Dialog>
      <StepNotes />
    </Page>
  );
};

export default App;
